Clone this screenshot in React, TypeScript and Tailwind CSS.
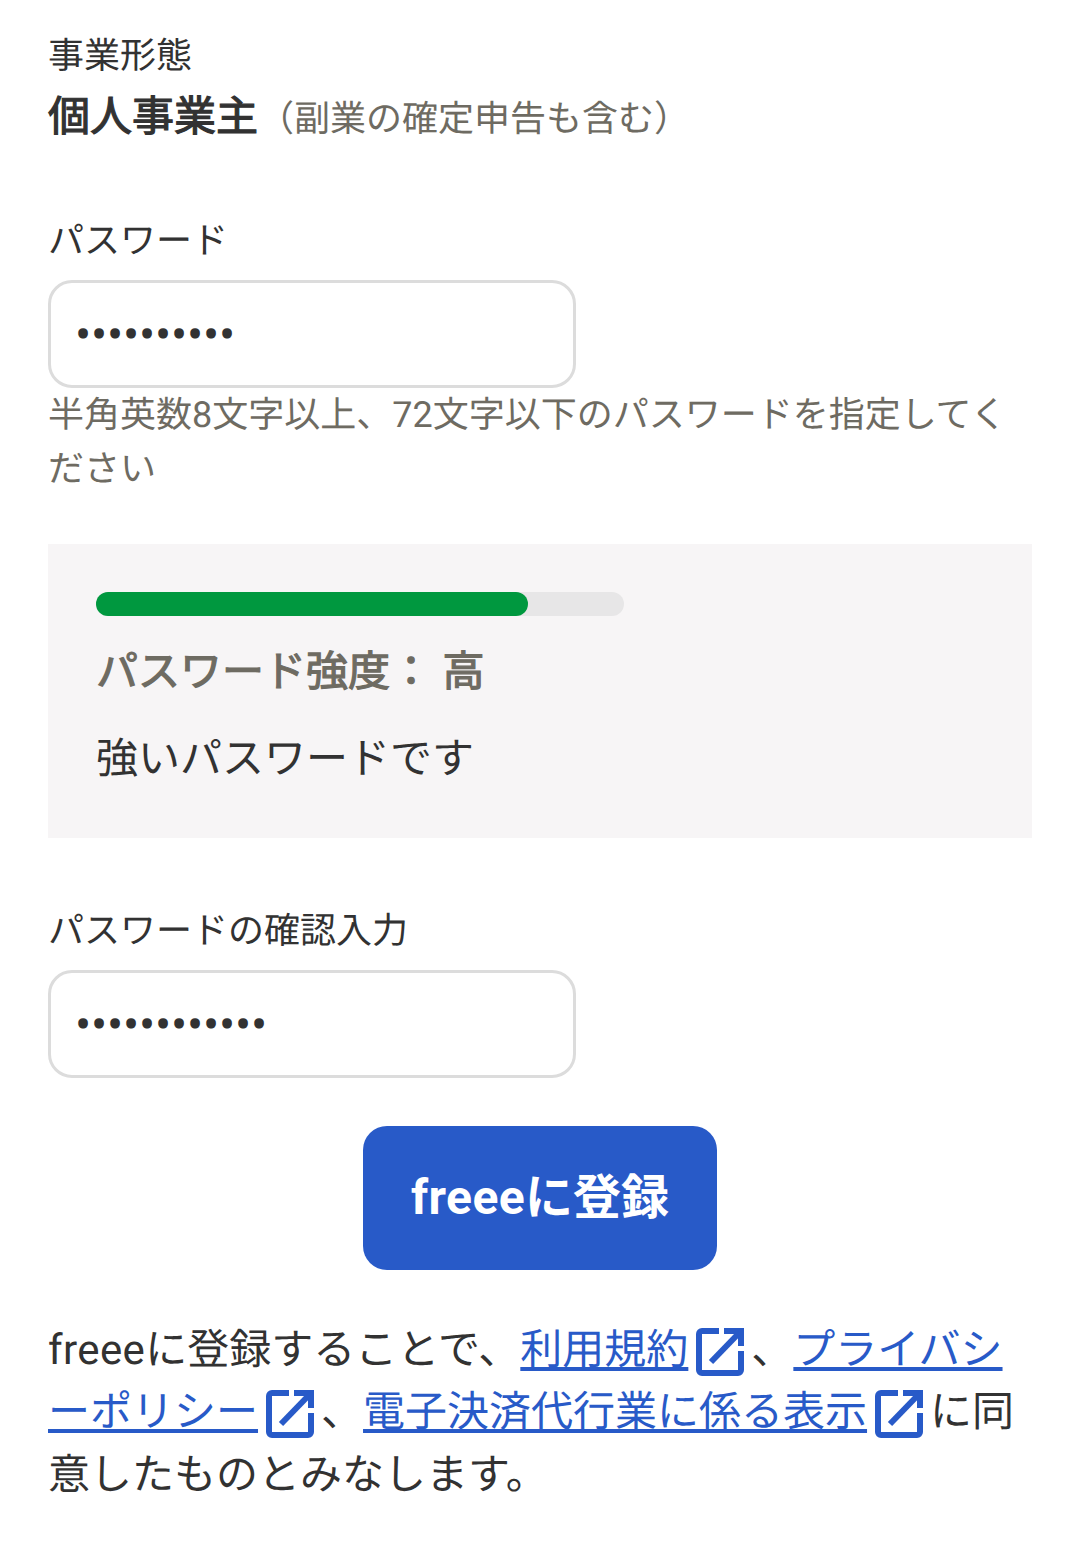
function ExternalIcon() {
  return (
    <svg viewBox="0 0 48 48" className="inline-block w-[48px] h-[48px] align-[-12px] ml-[8px] mr-[7px]" fill="none">
      <path d="M23 3H6a3 3 0 0 0-3 3v36a3 3 0 0 0 3 3h36a3 3 0 0 0 3-3V23" stroke="#285ac8" strokeWidth="6" />
      <path d="M28 3h17V18" stroke="#285ac8" strokeWidth="6" />
      <path d="M45 3 15 34" stroke="#285ac8" strokeWidth="6" />
    </svg>
  );
}

function Field({ dots }: { dots: number }) {
  return (
    <div className="flex h-[108px] w-[528px] items-center rounded-[24px] border-[3px] border-[#dcdcdc] bg-white pl-[24px]">
      <span className="pt-[2px] text-[48px] leading-none tracking-[-0.2px] text-[#323232]">{'•'.repeat(dots)}</span>
    </div>
  );
}

export default function App() {
  return (
    <div lang="ja" className="min-h-[1550px] w-[1080px] bg-white px-[48px] pt-[29px] text-[#323232] [text-rendering:geometricPrecision] font-['Roboto','Noto_Sans_CJK_JP',sans-serif]">
      <div className="text-[36px] leading-[54px]">事業形態</div>
      <div className="mt-[3px] flex items-baseline leading-[63px]">
        <span className="text-[42px] [-webkit-text-stroke:1.2px_#323232]">個人事業主</span>
        <span className="text-[36px] text-[#6e6b62]">（副業の確定申告も含む）</span>
      </div>
      <div className="mt-[63px] text-[36px] leading-[54px]">パスワード</div>
      <div className="mt-[12px]"><Field dots={10} /></div>
      <p className="text-[36px] leading-[54px] text-[#6e6b62]">半角英数8文字以上、72文字以下のパスワードを指定してください</p>
      <div className="mt-[48px] h-[294px] bg-[#f7f5f6] p-[48px]">
        <div className="h-[24px] w-[528px] rounded-full bg-[#e7e6e7]">
          <div className="h-full w-[432px] rounded-full bg-[#00983f]" />
        </div>
        <div className="mt-[25px] text-[42px] leading-[63px] text-[#6e6b62] [-webkit-text-stroke:1.2px_#6e6b62]">パスワード強度： 高</div>
        <div className="mt-[24px] text-[42px] leading-[63px] text-[#323232]">強いパスワードです</div>
      </div>
      <div className="mt-[66px] text-[36px] leading-[54px]">パスワードの確認入力</div>
      <div className="mt-[12px]"><Field dots={12} /></div>
      <div className="mt-[48px] flex justify-center">
        <button className="h-[144px] w-[354px] rounded-[24px] bg-[#285ac8] text-[48px] font-bold text-white"><span className="tracking-[0.4px]">freee</span>に登録</button>
      </div>
      <p className="mt-[50px] text-[42px] leading-[62.4px] text-[#323232]">
        <span className="tracking-[0.4px]">freee</span>に登録することで、<a className="text-[#285ac8] underline">利用規約</a><ExternalIcon />、<a className="text-[#285ac8] underline">プライバシーポリシー</a><ExternalIcon />、<a className="text-[#285ac8] underline">電子決済代行業に係る表示</a><ExternalIcon />に同意したものとみなします。
      </p>
    </div>
  );
}
